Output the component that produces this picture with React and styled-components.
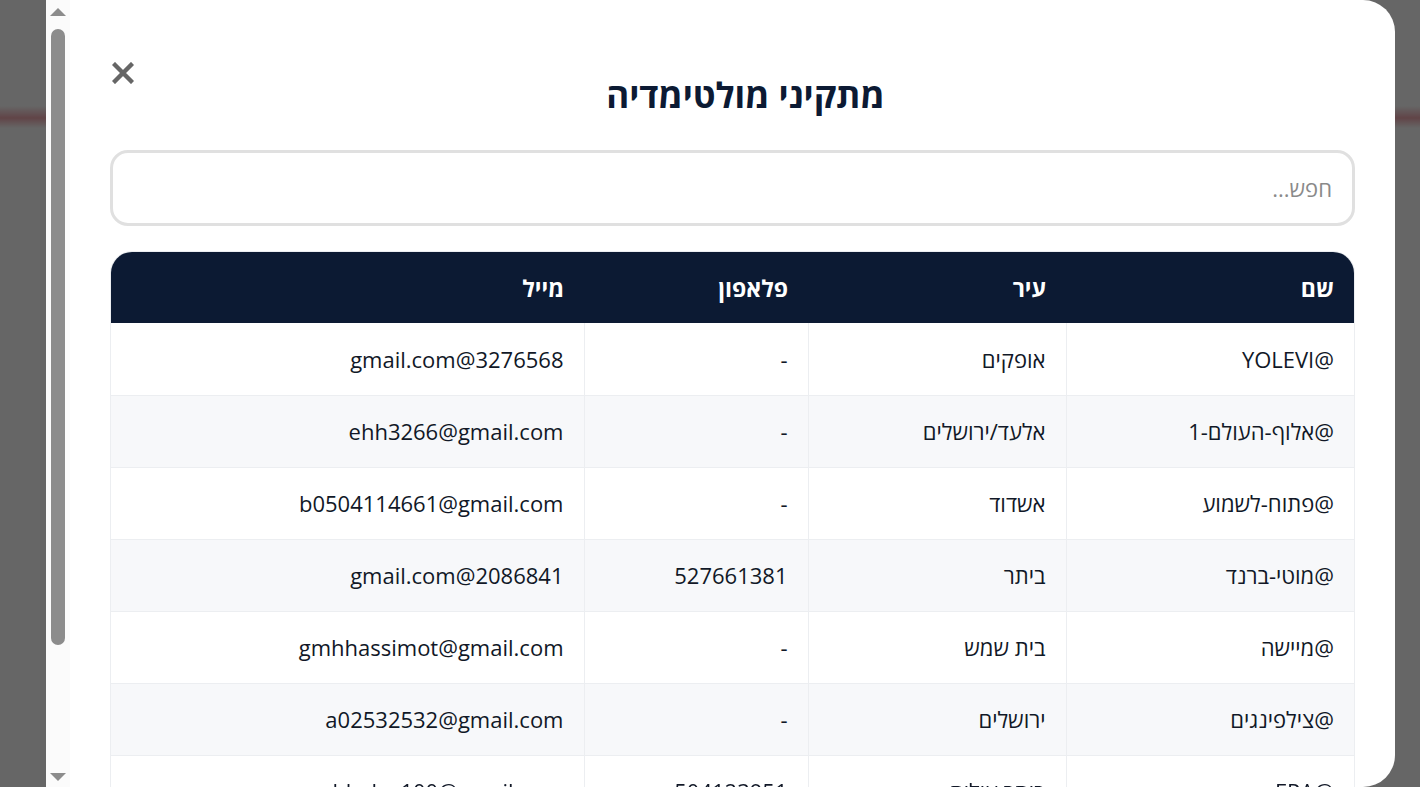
import React, { useState } from 'react'
import styled, { createGlobalStyle } from 'styled-components'

const GlobalStyle = createGlobalStyle`
    html, body {
        margin: 0;
        padding: 0;
        background: #fff;
        font-family: "Open Sans", "Liberation Sans", sans-serif;
    }
    * {
        box-sizing: border-box;
    }
`

const installers = [
    { name: '@YOLEVI', city: 'אופקים', phone: '-', email: '3276568@gmail.com' },
    { name: '@אלוף-העולם-1', city: 'אלעד/ירושלים', phone: '-', email: 'ehh3266@gmail.com' },
    { name: '@פתוח-לשמוע', city: 'אשדוד', phone: '-', email: 'b0504114661@gmail.com' },
    { name: '@מוטי-ברנד', city: 'ביתר', phone: '527661381', email: '2086841@gmail.com' },
    { name: '@מיישה', city: 'בית שמש', phone: '-', email: 'gmhhassimot@gmail.com' },
    { name: '@צילפינגים', city: 'ירושלים', phone: '-', email: 'a02532532@gmail.com' },
    { name: '@EPA', city: 'ביתר עילית', phone: '504123951', email: 'bhalev100@gmail.com' },
    { name: '@נאור-מולטימדיה', city: 'בני ברק', phone: '-', email: 'naor.media@gmail.com' },
]

function App() {
    const [search, setSearch] = useState("")

    const filtered = installers.filter((row) =>
        [row.name, row.city, row.phone, row.email].some((v) => v.includes(search))
    )

    return (
        <>
            <GlobalStyle />
            <Page>
                <PageHeader />
            </Page>
            <Overlay />
            <Modal>
                <Content>
                    <ModalHead>
                        <Title>מתקיני מולטימדיה</Title>
                        <CloseButton aria-label="סגור">
                            <svg width="22" height="22" viewBox="0 0 22 22">
                                <path d="M3 3 L19 19 M19 3 L3 19" stroke="#666" strokeWidth="4.4" strokeLinecap="square" />
                            </svg>
                        </CloseButton>
                    </ModalHead>

                    <SearchInput
                        type="text"
                        placeholder="חפש..."
                        value={search}
                        onChange={(e) => { setSearch(e.target.value) }}
                    />

                    <TableWrap>
                        <Table>
                            <thead>
                                <tr>
                                    <Th $w="288px">שם</Th>
                                    <Th $w="258px">עיר</Th>
                                    <Th $w="224px">פלאפון</Th>
                                    <Th>מייל</Th>
                                </tr>
                            </thead>
                            <tbody>
                                {filtered.map((row) => (
                                    <Row key={row.name}>
                                        <Td>{row.name}</Td>
                                        <Td>{row.city}</Td>
                                        <Td>{row.phone}</Td>
                                        <Td>{row.email}</Td>
                                    </Row>
                                ))}
                            </tbody>
                        </Table>
                    </TableWrap>
                </Content>

                <Rail>
                    <RailArrow>
                        <svg width="16" height="8" viewBox="0 0 16 8"><polygon points="8,0 16,8 0,8" fill="#8c8c8c" /></svg>
                    </RailArrow>
                    <RailTrack>
                        <Thumb />
                    </RailTrack>
                    <RailArrow $down>
                        <svg width="16" height="8" viewBox="0 0 16 8"><polygon points="0,0 16,0 8,8" fill="#8c8c8c" /></svg>
                    </RailArrow>
                </Rail>
            </Modal>
        </>
    )
}

export default App

const Page = styled.div`
    height: 787px;
    background: #fff;
`

const PageHeader = styled.div`
    height: 128px;
    background: linear-gradient(to bottom, #fff 0, #fff 106px, #f2aab2 118px, #fff 128px);
`

const Overlay = styled.div`
    position: fixed;
    inset: 0;
    background: rgba(0, 0, 0, 0.6);
`

const Modal = styled.div`
    position: fixed;
    top: 0;
    bottom: 0;
    left: 46px;
    width: 1349px;
    background: #fff;
    border-radius: 0 32px 32px 0;
    overflow: hidden;
    direction: rtl;
    display: flex;
    color: #111827;
`

const Content = styled.div`
    flex: 1;
    overflow-y: auto;
    padding: 56px 40px 56px;
    scrollbar-width: none;
    &::-webkit-scrollbar {
        display: none;
    }
`

const Rail = styled.div`
    width: 24px;
    flex-shrink: 0;
    background: #fbfbfb;
    display: flex;
    flex-direction: column;
`

const RailArrow = styled.div`
    height: 22px;
    display: flex;
    justify-content: center;
    align-items: ${(p) => (p.$down ? 'flex-start' : 'flex-end')};
    padding: ${(p) => (p.$down ? '8px 0 0' : '0 0 6px')};
`

const RailTrack = styled.div`
    flex: 1;
    display: flex;
    justify-content: center;
    padding-top: 7px;
`

const Thumb = styled.div`
    width: 14px;
    height: 616px;
    border-radius: 7px;
    background: #8c8c8c;
`

const ModalHead = styled.div`
    display: flex;
    align-items: flex-start;
`

const Title = styled.h2`
    flex: 1;
    margin: 18px 0 0;
    text-align: center;
    font-size: 35px;
    line-height: 41px;
    font-weight: 700;
    color: #0c1a33;
`

const CloseButton = styled.button`
    width: 26px;
    height: 26px;
    margin-top: 4px;
    padding: 0;
    border: none;
    background: none;
    cursor: pointer;
    display: flex;
    align-items: center;
    justify-content: center;
`

const SearchInput = styled.input`
    display: block;
    width: 100%;
    height: 76px;
    margin-top: 35px;
    padding: 0 20px;
    border: 3px solid #e0e0e0;
    border-radius: 18px;
    font-family: inherit;
    font-size: 22px;
    color: #111827;
    direction: rtl;
    outline: none;

    &::placeholder {
        color: #8a8a8a;
    }
`

const TableWrap = styled.div`
    margin-top: 25px;
    border: 1px solid #eceef1;
    border-radius: 22px 22px 0 0;
    overflow: hidden;
`

const Table = styled.table`
    width: 100%;
    border-collapse: collapse;
    table-layout: fixed;
    font-size: 22px;
`

const Th = styled.th`
    width: ${(p) => p.$w || 'auto'};
    height: 71px;
    padding: 0 20px;
    background: #0c1a33;
    color: #fff;
    text-align: right;
    font-size: 23px;
    font-weight: 700;
`

const Row = styled.tr`
    background: #fff;
    &:nth-child(even) {
        background: #f7f8fa;
    }
`

const Td = styled.td`
    height: 72px;
    padding: 0 20px;
    text-align: right;
    border-bottom: 1px solid #eceef1;
    border-left: 1px solid #eceef1;
    white-space: nowrap;
    overflow: hidden;

    &:last-child {
        border-left: none;
    }
`
